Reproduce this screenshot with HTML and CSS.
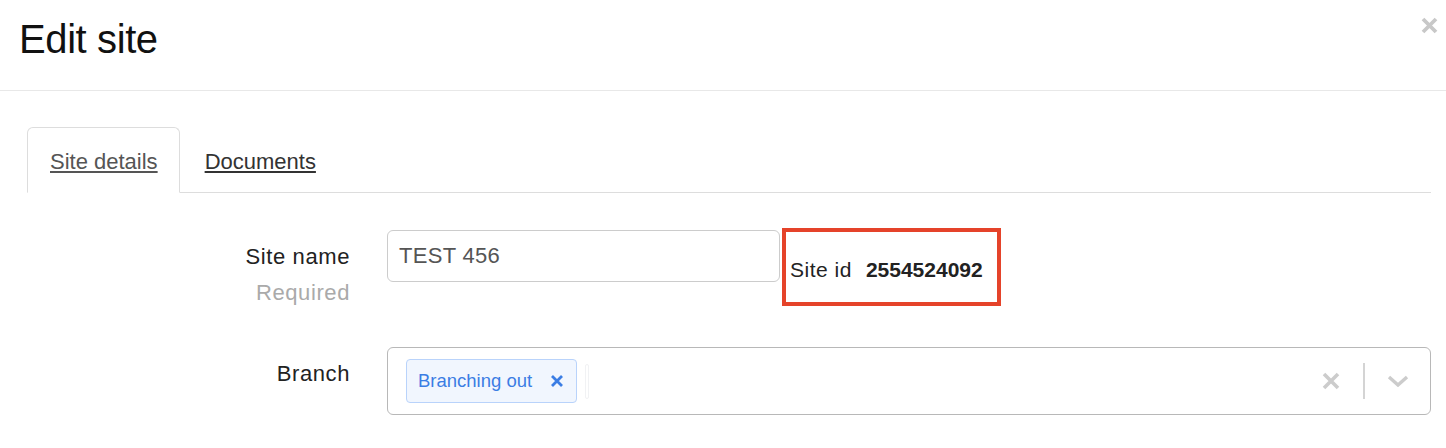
FILE: index.html
```html
<!DOCTYPE html>
<html lang="en">
<head>
<meta charset="utf-8">
<title>Edit site</title>
<link rel="stylesheet" href="styles.css">
</head>
<body>
<div class="modal">
  <header class="modal-header">
    <h1 class="modal-title">Edit site</h1>
    <button class="close" aria-label="Close">
      <svg width="17" height="17" viewBox="0 0 17 17"><path d="M2 2 L15 15 M15 2 L2 15" stroke="#c8c8c8" stroke-width="3.8" fill="none"/></svg>
    </button>
  </header>
  <div class="modal-body">
    <ul class="tabs">
      <li class="tab active"><a href="#">Site details</a></li>
      <li class="tab"><a href="#">Documents</a></li>
    </ul>
    <div class="form">
      <div class="form-row first">
        <div class="label-col">
          <div class="label">Site name</div>
          <div class="hint">Required</div>
        </div>
        <div class="control-col">
          <div class="text-input">TEST 456</div>
          <div class="site-id"><span>Site id</span><strong>2554524092</strong></div>
        </div>
      </div>
      <div class="form-row">
        <div class="label-col">
          <div class="label">Branch</div>
        </div>
        <div class="control-col">
          <div class="select">
            <div class="values">
              <div class="chip">
                <span class="chip-text">Branching out</span>
                <svg class="chip-x" width="12" height="12" viewBox="0 0 12 12"><path d="M1 1 L11 11 M11 1 L1 11" stroke="#3b7de4" stroke-width="2.8" fill="none"/></svg>
              </div>
              <div class="cursor"></div>
            </div>
            <div class="indicators">
              <svg width="18" height="18" viewBox="0 0 18 18"><path d="M2 2 L16 16 M16 2 L2 16" stroke="#cccccc" stroke-width="3.6" fill="none"/></svg>
              <span class="sep"></span>
              <svg width="22" height="12" viewBox="0 0 22 12"><polyline points="2,2 11,10 20,2" stroke="#cccccc" stroke-width="3.4" fill="none"/></svg>
            </div>
          </div>
        </div>
      </div>
    </div>
  </div>
</div>
</body>
</html>
```
FILE: styles.css
```css
* { box-sizing: border-box; }
html, body { margin: 0; padding: 0; background: #fff; }
body {
  font-family: "Liberation Sans", Arial, Helvetica, sans-serif;
  color: #222;
  width: 1446px;
  height: 448px;
  overflow: hidden;
}
.modal { width: 1446px; }

.modal-header {
  height: 91px;
  border-bottom: 1px solid #e8e8e8;
  display: flex;
  justify-content: space-between;
  align-items: flex-start;
  padding: 17px 8px 0 19px;
}
.modal-title {
  margin: 0;
  font-size: 40px;
  line-height: 44px;
  font-weight: normal;
  letter-spacing: -0.4px;
  color: #111;
}
.close {
  border: 0;
  background: none;
  padding: 0;
  margin: 0;
  width: 17px;
  height: 17px;
  cursor: pointer;
}
.close svg { display: block; }

.modal-body { padding: 36px 15px 0 27px; }

.tabs {
  list-style: none;
  margin: 0;
  padding: 0;
  display: flex;
  border-bottom: 1px solid #dddddd;
}
.tab {
  margin-bottom: -1px;
  margin-right: 2px;
  border: 1px solid transparent;
  border-radius: 6px 6px 0 0;
  padding: 18px 21px 14px 22px;
  font-size: 22px;
  line-height: 32px;
}
.tab a { color: #333; text-decoration: underline; text-underline-offset: 2px; }
.tab.active {
  border-color: #dddddd;
  border-bottom-color: #fff;
  background: #fff;
}
.tab.active a { color: #555; }

.form { padding-top: 37px; }
.form-row { display: flex; align-items: flex-start; }
.form-row.first { margin-bottom: 39px; }
.label-col {
  width: 323px;
  text-align: right;
  font-size: 22px;
  line-height: 30px;
  letter-spacing: 0.6px;
  padding-top: 12px;
  flex: none;
}
.label { color: #222; }
.hint { color: #aaa; margin-top: 6px; }
.control-col {
  margin-left: 37px;
  flex: 1;
  display: flex;
  align-items: flex-start;
}
.text-input {
  width: 393px;
  height: 52px;
  border: 1px solid #cccccc;
  border-radius: 6px;
  padding: 0 11px;
  font-size: 22px;
  line-height: 50px;
  letter-spacing: 0.3px;
  color: #555;
}
.site-id {
  margin-left: 2px;
  margin-top: -2px;
  width: 219px;
  height: 78px;
  border: 4px solid #e5432a;
  padding: 26px 0 0 4px;
  font-size: 21px;
  line-height: 24px;
  color: #222;
  white-space: nowrap;
}
.site-id span { letter-spacing: 0.5px; }
.site-id strong { margin-left: 14px; font-weight: bold; }

.select {
  flex: 1;
  height: 68px;
  border: 1px solid #b8b8b8;
  border-radius: 6px;
  display: flex;
  align-items: center;
  padding: 0 0 0 18px;
}
.values { flex: 1; display: flex; align-items: center; }
.chip {
  height: 44px;
  display: flex;
  align-items: center;
  background: #f1f6fe;
  border: 1px solid #b9d3fb;
  border-radius: 4px;
  padding: 0 13px 0 11px;
}
.chip-text { font-size: 18.5px; color: #3b7de4; }
.chip-x { margin-left: 19px; display: block; }
.cursor {
  margin-left: 8px;
  width: 4px;
  height: 35px;
  border: 1px solid #f1f2f4;
  border-radius: 2px;
}
.indicators {
  display: flex;
  align-items: center;
  padding-right: 21px;
}
.indicators svg { display: block; }
.sep {
  width: 2px;
  height: 36px;
  background: #d4d4d4;
  margin: 0 22px 0 23px;
}
```
